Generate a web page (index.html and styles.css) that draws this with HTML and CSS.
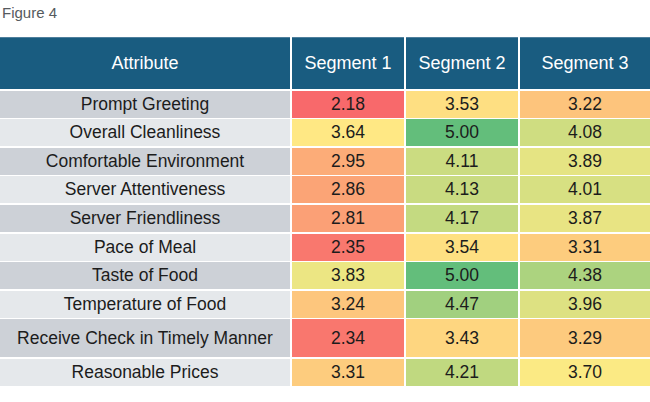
FILE: index.html
```html
<!DOCTYPE html>
<html lang="en">
<head>
<meta charset="utf-8">
<title>Figure 4</title>
<link rel="stylesheet" href="styles.css">
</head>
<body>
<div class="figure">
  <div class="caption">Figure 4</div>
  <div class="grid">
    <div class="hd">Attribute</div>
    <div class="hd">Segment 1</div>
    <div class="hd">Segment 2</div>
    <div class="hd">Segment 3</div>

    <div class="attr dark">Prompt Greeting</div>
    <div class="val" style="background:#f8696b">2.18</div>
    <div class="val" style="background:#fedf82">3.53</div>
    <div class="val" style="background:#fdc47c">3.22</div>

    <div class="attr light">Overall Cleanliness</div>
    <div class="val" style="background:#ffe884">3.64</div>
    <div class="val" style="background:#63be7b">5.00</div>
    <div class="val" style="background:#cfdd81">4.08</div>

    <div class="attr dark">Comfortable Environment</div>
    <div class="val" style="background:#fcac78">2.95</div>
    <div class="val" style="background:#cbdc81">4.11</div>
    <div class="val" style="background:#e5e483">3.89</div>

    <div class="attr light">Server Attentiveness</div>
    <div class="val" style="background:#fba476">2.86</div>
    <div class="val" style="background:#c9db81">4.13</div>
    <div class="val" style="background:#d7e082">4.01</div>

    <div class="attr dark">Server Friendliness</div>
    <div class="val" style="background:#fba076">2.81</div>
    <div class="val" style="background:#c4da81">4.17</div>
    <div class="val" style="background:#e8e483">3.87</div>

    <div class="attr light">Pace of Meal</div>
    <div class="val" style="background:#f9786e">2.35</div>
    <div class="val" style="background:#fee082">3.54</div>
    <div class="val" style="background:#fdcc7e">3.31</div>

    <div class="attr dark">Taste of Food</div>
    <div class="val" style="background:#ece683">3.83</div>
    <div class="val" style="background:#63be7b">5.00</div>
    <div class="val" style="background:#acd37f">4.38</div>

    <div class="attr light">Temperature of Food</div>
    <div class="val" style="background:#fdc67d">3.24</div>
    <div class="val" style="background:#a1d07f">4.47</div>
    <div class="val" style="background:#dde182">3.96</div>

    <div class="attr dark tall">Receive Check in Timely Manner</div>
    <div class="val tall" style="background:#f9776e">2.34</div>
    <div class="val tall" style="background:#fed680">3.43</div>
    <div class="val tall" style="background:#fdca7e">3.29</div>

    <div class="attr light">Reasonable Prices</div>
    <div class="val" style="background:#fdcc7e">3.31</div>
    <div class="val" style="background:#c0d980">4.21</div>
    <div class="val" style="background:#fbea84">3.70</div>
  </div>
</div>
</body>
</html>
```

FILE: styles.css
```css
html, body {
  margin: 0;
  padding: 0;
  background: #ffffff;
}

body {
  font-family: "Liberation Sans", Arial, sans-serif;
  color: #1c1c1c;
  width: 650px;
  height: 402px;
  overflow: hidden;
}

.caption {
  height: 37px;
  box-sizing: border-box;
  padding: 4px 0 0 2px;
  font-size: 15px;
  line-height: 17px;
  color: #555a5e;
}

.grid {
  display: grid;
  grid-template-columns: 290px 112px 112px 130px;
  grid-template-rows: 52px repeat(8, 27px) 38px 27px;
  column-gap: 2px;
  row-gap: 1.6px;
}

.grid > div {
  display: flex;
  align-items: center;
  justify-content: center;
  white-space: nowrap;
}

.hd {
  background: #195c80;
  color: #ffffff;
  font-size: 18px;
  border-top: 1px solid #4f7f9c;
  box-sizing: border-box;
}

.attr {
  font-size: 17.5px;
}

.dark {
  background: #cdd1d7;
}

.light {
  background: #e5e8eb;
}

.val {
  font-size: 17.5px;
}
```
